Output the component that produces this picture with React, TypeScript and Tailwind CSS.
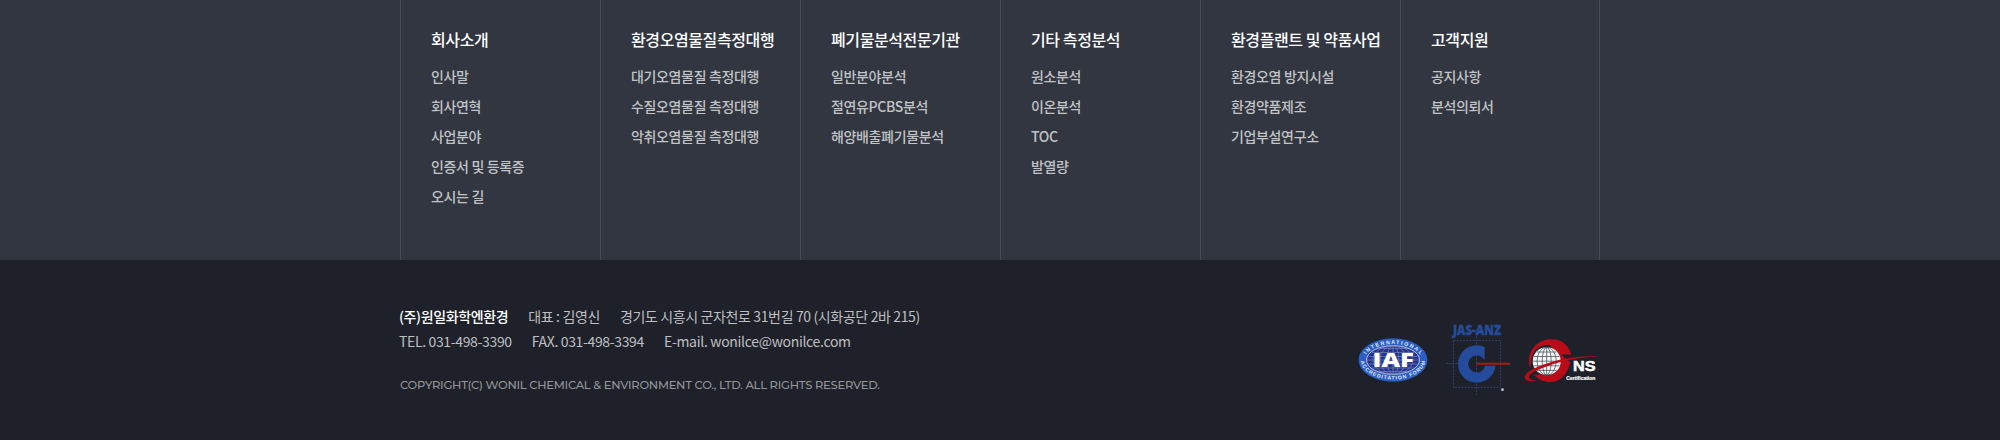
const columns: { title: string; items: string[] }[] = [
  { title: '회사소개', items: ['인사말', '회사연혁', '사업분야', '인증서 및 등록증', '오시는 길'] },
  { title: '환경오염물질측정대행', items: ['대기오염물질 측정대행', '수질오염물질 측정대행', '악취오염물질 측정대행'] },
  { title: '폐기물분석전문기관', items: ['일반분야분석', '절연유PCBS분석', '해양배출폐기물분석'] },
  { title: '기타 측정분석', items: ['원소분석', '이온분석', 'TOC', '발열량'] },
  { title: '환경플랜트 및 약품사업', items: ['환경오염 방지시설', '환경약품제조', '기업부설연구소'] },
  { title: '고객지원', items: ['공지사항', '분석의뢰서'] },
];

function IafLogo() {
  return (
    <svg width="70" height="44" viewBox="0 0 70 44" className="block overflow-visible">
      <defs>
        <path id="iaf-top" d="M6 22.5 A29 16.5 0 0 1 64 22.5" />
        <path id="iaf-bottom" d="M2.6 22 A32.4 19.6 0 0 0 67.4 22" />
      </defs>
      <ellipse cx="35" cy="22" rx="34.4" ry="21.7" fill="#2b5fc4" />
      <ellipse cx="35" cy="22" rx="26.5" ry="14.3" fill="#27348c" stroke="#c3cdec" strokeWidth="0.9" />
      <g fill="none" stroke="#7f8dc6" strokeWidth="0.6">
        <ellipse cx="35" cy="22" rx="20" ry="14.3" />
        <ellipse cx="35" cy="22" rx="13" ry="14.3" />
        <ellipse cx="35" cy="22" rx="6" ry="14.3" />
        <path d="M35 7.7V36.3M20 10.5H50M14 14.5H56M10.5 18.5H59.5M9 22H61M10.5 26H59.5M14 30H56M20 33.5H50" />
      </g>
      <text x="14.5" y="29.3" textLength="41.5" lengthAdjust="spacingAndGlyphs" fontFamily="Open Sans, sans-serif" fontWeight="800" fontSize="19.2" fill="#fff">IAF</text>
      <g fontFamily="Liberation Sans, sans-serif" fontWeight="700" fontSize="5.2" fill="#e2eafa">
        <text><textPath href="#iaf-top" startOffset="50%" textAnchor="middle" textLength="60">INTERNATIONAL</textPath></text>
        <text><textPath href="#iaf-bottom" startOffset="50%" textAnchor="middle" textLength="80">ACCREDITATION FORUM</textPath></text>
      </g>
    </svg>
  );
}

function JasAnzLogo() {
  return (
    <svg width="66" height="72" viewBox="0 0 66 72" className="block overflow-visible">
      <text x="7" y="11.3" textLength="48" lengthAdjust="spacingAndGlyphs" fontFamily="Open Sans, sans-serif" fontWeight="800" fontSize="14.5" fill="#254b9c" stroke="#254b9c" strokeWidth="0.4">JAS-ANZ</text>
      <g fill="none" stroke="#2b4275" strokeWidth="1" strokeDasharray="2 1.2">
        <path d="M7.5 16.5H54.5V63.5H7.5ZM30.5 12V71M0 39.5H18" />
      </g>
      <path d="M38.7 22.9A18.8 18.8 0 1 0 49.5 41.7H39.1A8.5 8.5 0 1 1 35.5 33L38.7 36Z" fill="#254b9c" />
      <path d="M31 38.8H64V40.8H31Z" fill="#ab1a10" />
      <circle cx="56.5" cy="65.7" r="1.4" fill="#b8c6e0" />
    </svg>
  );
}

function GnsLogo() {
  return (
    <svg width="75" height="46" viewBox="0 0 75 46" className="block overflow-visible">
      <path d="M46.3 16.5C43 5 35 1.2 26 1.2C13 1.2 4 11 4 23C4 35 13 44 26 44C36 44 42 36 45.5 24.5L36 16.5Z" fill="#b80d18" />
      <path d="M26 7.5C13 5 5.5 15 6 26L4 33L10 37L24 40Z" fill="#1e212a" />
      <path d="M10 37C15 35 20 37 25 37.5L30 43L22 43.7Q14 42 10 37Z" fill="#b80d18" />
      <circle cx="21.7" cy="23.2" r="14" fill="#f5f6f7" />
      <g fill="none" stroke="#38404a" strokeWidth="0.7">
        <ellipse cx="21.7" cy="23.2" rx="9.6" ry="14" />
        <ellipse cx="21.7" cy="23.2" rx="4.5" ry="14" />
        <path d="M21.7 9.2V37.2M11.8 14H31.6M8.8 18.5H34.6M7.8 23.2H35.8M8.8 27.8H34.6M11.8 32.4H31.6" />
      </g>
      <path d="M74 18.7C56 18.5 34 23 15 31C6 34.5 2 38 5 41Q7 42.5 12 42.4C-4 45 -3 37 7 31.5C24 23 52 16.5 74 18.7Z" fill="#b80d18" />
      <text x="48" y="33.3" textLength="22.5" lengthAdjust="spacingAndGlyphs" fontFamily="Liberation Sans, sans-serif" fontWeight="700" fontSize="14.5" fill="#fff" stroke="#fff" strokeWidth="0.5">NS</text>
      <text x="41.3" y="42.4" textLength="29" lengthAdjust="spacingAndGlyphs" fontFamily="Liberation Sans, sans-serif" fontWeight="700" fontSize="5.6" fill="#fff" stroke="#fff" strokeWidth="0.2">Certification</text>
    </svg>
  );
}

export default function App() {
  return (
    <footer className="h-[440px] w-full bg-[#1e2129] font-['Noto_Sans_CJK_KR',sans-serif]">
      <div className="h-[260px] bg-[#313641]">
        <nav className="mx-auto grid h-full w-[1200px] grid-cols-6">
          {columns.map((col) => (
            <section key={col.title} className="border-l border-[#474b55] pt-[26px] pl-[30px] whitespace-nowrap last:border-r">
              <h3 className="text-base leading-[26px] font-medium tracking-[-0.4px] text-white">{col.title}</h3>
              <ul className="mt-[9px] text-sm leading-[30px] font-medium tracking-[-0.35px] text-[#c2c3c5]">
                {col.items.map((item) => (
                  <li key={item}>{item}</li>
                ))}
              </ul>
            </section>
          ))}
        </nav>
      </div>
      <div className="mx-auto flex w-[1200px] justify-between">
        <div className="pt-[44px] whitespace-nowrap">
          <address className="-ml-px text-sm leading-[25px] tracking-[-0.35px] text-[#bebfc1] not-italic">
            <p className="flex gap-5 tracking-[-0.37px]">
              <strong className="font-medium text-white">(주)원일화학엔환경</strong>
              <span>대표 : 김영신</span>
              <span>경기도 시흥시 군자천로 31번길 70 (시화공단 2바 215)</span>
            </p>
            <p className="flex gap-5">
              <span>TEL. 031-498-3390</span>
              <span>FAX. 031-498-3394</span>
              <span className="tracking-[-0.31px]">E-mail. wonilce@wonilce.com</span>
            </p>
          </address>
          <p className="mt-[21px] font-['Montserrat','Inter',sans-serif] text-[11.5px] leading-5 font-medium tracking-[-0.24px] text-[#94969a]">
            COPYRIGHT(C) WONIL CHEMICAL &amp; ENVIRONMENT CO., LTD. ALL RIGHTS RESERVED.
          </p>
        </div>
        <div className="flex items-start pt-[64px]">
          <div className="mt-[14px] mr-[18px]"><IafLogo /></div>
          <div className="mr-[13px]"><JasAnzLogo /></div>
          <div className="mt-[14px]"><GnsLogo /></div>
        </div>
      </div>
    </footer>
  );
}
